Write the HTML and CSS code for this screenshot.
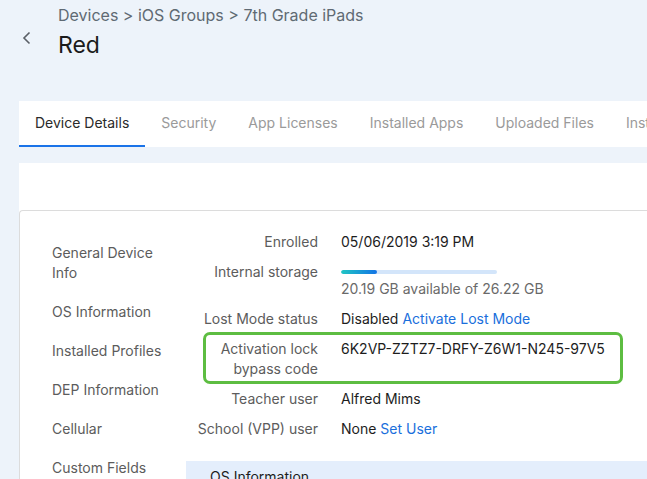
FILE: index.html
```html
<!DOCTYPE html>
<html>
<head>
<meta charset="utf-8">
<link rel="stylesheet" href="styles.css">
</head>
<body>
<header class="page-header">
  <a class="back" href="#"><svg width="12" height="14" viewBox="0 0 12 14"><path d="M8.5 1.5 L3 7 L8.5 12.5" fill="none" stroke="#5a5f66" stroke-width="1.6"/></svg></a>
  <div class="titles">
    <div class="crumbs">Devices &gt; iOS Groups &gt; 7th Grade iPads</div>
    <h1 class="title">Red</h1>
  </div>
</header>

<nav class="tabs">
  <span class="tab active">Device Details</span>
  <span class="tab">Security</span>
  <span class="tab">App Licenses</span>
  <span class="tab">Installed Apps</span>
  <span class="tab">Uploaded Files</span>
  <span class="tab">Installed Profiles</span>
</nav>

<main class="panel">
  <section class="card">
    <ul class="side-nav">
      <li>General Device<br>Info</li>
      <li>OS Information</li>
      <li>Installed Profiles</li>
      <li>DEP Information</li>
      <li>Cellular</li>
      <li>Custom Fields</li>
    </ul>
    <div class="details">
      <dl class="rows">
        <div class="row"><dt>Enrolled</dt><dd>05/06/2019 3:19 PM</dd></div>
        <div class="row"><dt>Internal storage</dt><dd><div class="bar"><div class="fill" style="width:23%"></div></div><div class="muted">20.19 GB available of 26.22 GB</div></dd></div>
        <div class="row"><dt>Lost Mode status</dt><dd>Disabled <a href="#">Activate Lost Mode</a></dd></div>
        <div class="row highlight"><dt>Activation lock<br>bypass code</dt><dd>6K2VP-ZZTZ7-DRFY-Z6W1-N245-97V5</dd></div>
        <div class="row"><dt>Teacher user</dt><dd>Alfred Mims</dd></div>
        <div class="row"><dt>School (VPP) user</dt><dd>None <a href="#">Set User</a></dd></div>
      </dl>
      <div class="section-head">OS Information</div>
    </div>
  </section>
</main>
</body>
</html>
```
FILE: styles.css
```css
html, body {
  margin: 0;
  padding: 0;
  height: 479px;
  overflow: hidden;
  background: #edf3fa;
  font-family: "Inter", "Liberation Sans", sans-serif;
  font-size: 14px;
  color: #1d1d1d;
}
.page-header {
  display: flex;
  align-items: flex-start;
  height: 101px;
}
.back {
  display: block;
  margin: 31px 0 0 21px;
  width: 12px;
  height: 14px;
}
.back svg { display: block; }
.titles {
  margin-left: 25px;
  padding-top: 4px;
}
.crumbs {
  font-size: 16px;
  line-height: 22px;
  color: #5f6a73;
}
.title {
  margin: 4px 0 0;
  font-size: 23px;
  line-height: 30px;
  font-weight: 400;
  color: #1b1b1b;
}
.tabs {
  margin-left: 19px;
  height: 46px;
  background: #fff;
  display: flex;
  white-space: nowrap;
  overflow: hidden;
}
.tab {
  padding: 0 16px;
  line-height: 44px;
  color: #9a9a9a;
  border-bottom: 3px solid transparent;
  height: 44px;
  box-sizing: content-box;
}
.tab.active {
  color: #2a2a2a;
  border-bottom-color: #1a73e8;
}
.panel {
  margin: 16px 0 0 19px;
  background: #fff;
  padding-top: 47px;
  height: 269px;
}
.card {
  border: 1px solid #dcdcdc;
  border-right: none;
  border-bottom: none;
  border-radius: 4px 0 0 0;
  display: flex;
  height: 268px;
  overflow: hidden;
}
.side-nav {
  list-style: none;
  margin: 0;
  padding: 32px 0 0 32px;
  width: 134px;
  color: #5c5c5c;
}
.side-nav li {
  line-height: 20px;
  margin-bottom: 19px;
}
.details {
  flex: 1;
  padding-top: 21px;
}
.rows {
  margin: 0;
  display: flex;
  flex-direction: column;
  gap: 10px;
}
.row {
  display: grid;
  grid-template-columns: 132px 1fr;
  column-gap: 23px;
  line-height: 20px;
  position: relative;
}
.row dt {
  text-align: right;
  color: #5c5c5c;
  white-space: nowrap;
}
.row dd {
  margin: 0;
  color: #1d1d1d;
  white-space: nowrap;
}
.row a {
  color: #1a6fdc;
  text-decoration: none;
}
.bar {
  width: 156px;
  height: 4px;
  border-radius: 2px;
  background: #d3e5fa;
  margin: 8px 0 5px;
  overflow: hidden;
}
.fill {
  height: 100%;
  border-radius: 2px;
  background: linear-gradient(90deg, #20c6c3, #1273e6);
}
.muted { color: #6a6a6a; }
.highlight::after {
  content: "";
  position: absolute;
  left: 17px;
  top: -7px;
  width: 420px;
  height: 52px;
  box-sizing: border-box;
  border: 3px solid #5dbd41;
  border-radius: 7px;
}
.section-head {
  margin-top: 22px;
  background: #e4eefc;
  padding: 6px 24px;
  line-height: 20px;
  color: #1d1d1d;
}
```
